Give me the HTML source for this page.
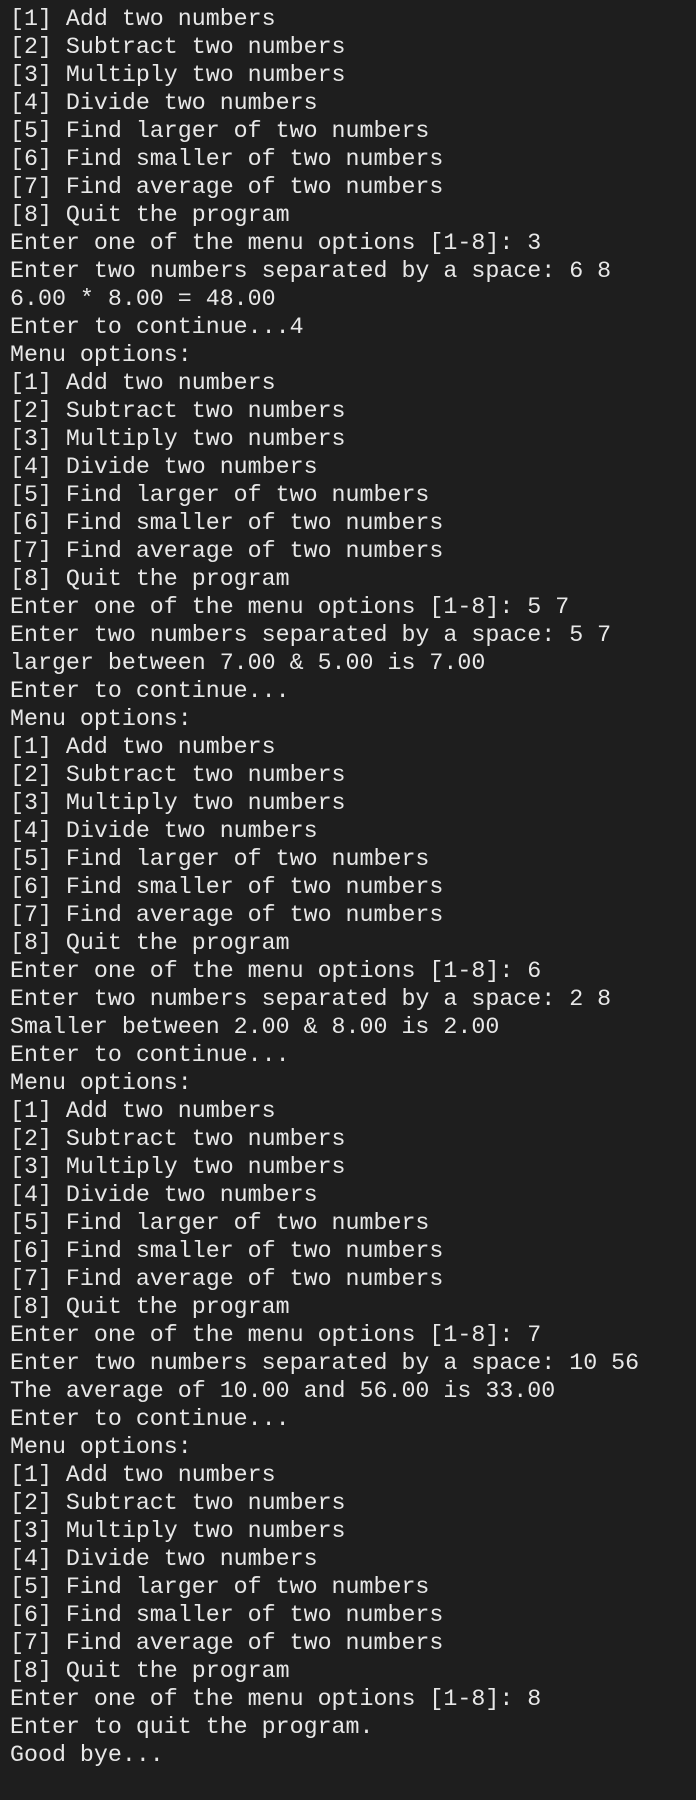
<!DOCTYPE html>
<html><head><meta charset="utf-8"><style>
html,body{margin:0;padding:0;background:#1e1e1e;}
body{width:696px;height:1800px;overflow:hidden;}
pre{margin:0;padding:5px 0 0 10px;font-family:"Liberation Mono",monospace;font-size:23.3px;line-height:28px;color:#e8e8e8;}
</style></head><body><pre>[1] Add two numbers
[2] Subtract two numbers
[3] Multiply two numbers
[4] Divide two numbers
[5] Find larger of two numbers
[6] Find smaller of two numbers
[7] Find average of two numbers
[8] Quit the program
Enter one of the menu options [1-8]: 3
Enter two numbers separated by a space: 6 8
6.00 * 8.00 = 48.00
Enter to continue...4
Menu options:
[1] Add two numbers
[2] Subtract two numbers
[3] Multiply two numbers
[4] Divide two numbers
[5] Find larger of two numbers
[6] Find smaller of two numbers
[7] Find average of two numbers
[8] Quit the program
Enter one of the menu options [1-8]: 5 7
Enter two numbers separated by a space: 5 7
larger between 7.00 &amp; 5.00 is 7.00
Enter to continue...
Menu options:
[1] Add two numbers
[2] Subtract two numbers
[3] Multiply two numbers
[4] Divide two numbers
[5] Find larger of two numbers
[6] Find smaller of two numbers
[7] Find average of two numbers
[8] Quit the program
Enter one of the menu options [1-8]: 6
Enter two numbers separated by a space: 2 8
Smaller between 2.00 &amp; 8.00 is 2.00
Enter to continue...
Menu options:
[1] Add two numbers
[2] Subtract two numbers
[3] Multiply two numbers
[4] Divide two numbers
[5] Find larger of two numbers
[6] Find smaller of two numbers
[7] Find average of two numbers
[8] Quit the program
Enter one of the menu options [1-8]: 7
Enter two numbers separated by a space: 10 56
The average of 10.00 and 56.00 is 33.00
Enter to continue...
Menu options:
[1] Add two numbers
[2] Subtract two numbers
[3] Multiply two numbers
[4] Divide two numbers
[5] Find larger of two numbers
[6] Find smaller of two numbers
[7] Find average of two numbers
[8] Quit the program
Enter one of the menu options [1-8]: 8
Enter to quit the program.
Good bye...</pre></body></html>
